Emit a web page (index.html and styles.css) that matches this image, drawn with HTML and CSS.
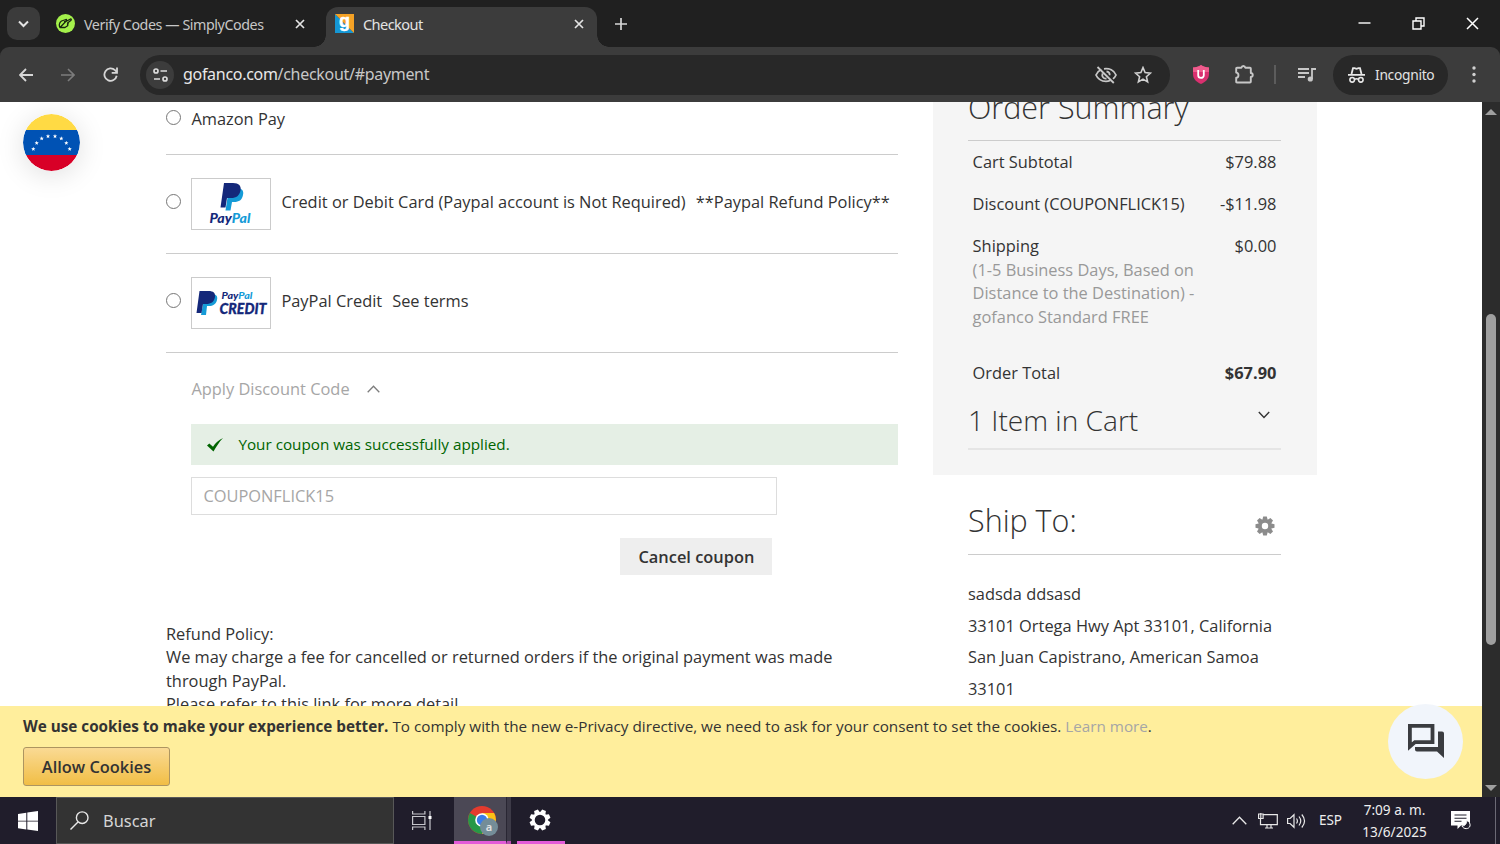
FILE: index.html
```html
<!DOCTYPE html>
<html lang="en">
<head>
    <meta charset="UTF-8">
    <meta name="viewport" content="width=device-width, initial-scale=1.0">
    <title>Checkout</title>
    <link rel="stylesheet" href="styles.css">
</head>
<body>

<!-- tabs -->
<div class="tabstrip">
  <button class="tab-search">
    <svg width="33" height="33" viewBox="0 0 33 33"><path d="M12 14.5l4.5 4.5 4.5-4.5" fill="none" stroke="#e3e3e3" stroke-width="2"/></svg>
  </button>
  <div class="tab">
    <svg class="favicon" width="19" height="19" viewBox="0 0 19 19"><circle cx="9.500" cy="9.500" r="9.500" fill="#a4f14b"/><path d="M4 13.500C2.800 12 3 8.500 5.500 7L10 5.500c.8 0 .8 1.200 0 1.500l-2 .8M9.500 7.800L14.500 5c1 0 1 1 .3 1.500L11.500 9c1 0 .8 1 0 1.500 .6.300.3 1.200-.3 1.500L9 13.500H4z" fill="none" stroke="#182410" stroke-width="1.300" stroke-linejoin="round"/></svg>
    <span class="tab-title">Verify Codes — SimplyCodes</span>
    <svg class="tab-x" width="10" height="10" viewBox="0 0 10 10"><path d="M1 1l8 8M9 1l-8 8" stroke="#e3e3e3" stroke-width="1.700"/></svg>
  </div>
  <div class="tab active">
    <svg class="favicon" width="19" height="19" viewBox="0 0 19 19"><path d="M0 0v19h19z" fill="#1597d5"/><path d="M0 0h19v19z" fill="#f5a225"/><text x="4" y="12.800" class="g">g</text></svg>
    <span class="tab-title">Checkout</span>
    <svg class="tab-x" width="10" height="10" viewBox="0 0 10 10"><path d="M1 1l8 8M9 1l-8 8" stroke="#e3e3e3" stroke-width="1.700"/></svg>
  </div>
  <svg class="plus" width="12" height="12" viewBox="0 0 12 12"><path d="M6 0v12M0 6h12" stroke="#d6d6d6" stroke-width="1.700"/></svg>
  <div class="win-buttons">
    <svg width="13" height="13" viewBox="0 0 13 13"><path d="M0.500 6h12" stroke="#fff" stroke-width="1.400"/></svg>
    <svg width="13" height="13" viewBox="0 0 13 13"><path d="M1 4h8v8H1zM4 4V1h8v8H9" fill="none" stroke="#fff" stroke-width="1.400"/></svg>
    <svg width="13" height="13" viewBox="0 0 13 13"><path d="M1 1l11 11M12 1L1 12" stroke="#fff" stroke-width="1.500"/></svg>
  </div>
</div>

<!-- toolbar -->
<div class="toolbar">
  <svg width="14" height="14" viewBox="0 0 14 14"><path d="M14 7H1.500M7 1L1 7l6 6" fill="none" stroke="#d6d6d6" stroke-width="1.800"/></svg>
  <svg width="14" height="14" viewBox="0 0 14 14"><path d="M0 7h12.500M7 1l6 6-6 6" fill="none" stroke="#7c7c7c" stroke-width="1.600"/></svg>
  <svg width="15" height="15" viewBox="0 0 15 15"><path d="M13.700 8.800A6.200 6.200 0 1 1 12 3.200L13.700 5" fill="none" stroke="#d6d6d6" stroke-width="1.800"/><path d="M14 .5v5.300H8.700" fill="none" stroke="#d6d6d6" stroke-width="1.800"/></svg>
  <div class="address">
    <span class="site-info">
      <svg width="15" height="14" viewBox="0 0 15 14"><g fill="none" stroke="#dcdcdc" stroke-width="1.700"><circle cx="3" cy="3" r="2"/><path d="M7.500 3H14M1 11h6"/><circle cx="12" cy="11" r="2"/></g></svg>
    </span>
    <span class="url">gofanco.com<span>/checkout/#payment</span></span>
    <svg class="eye" width="22" height="18" viewBox="0 0 22 18"><g fill="none" stroke="#c7c7c7" stroke-width="1.800"><path d="M6.300 3.500C3.900 4.500 2.100 6.500 1 9c1.800 4 5.600 6.300 10 6.300 1.500 0 2.900-.3 4.200-.8M9 2.800c5.200-.8 10 1.700 12 6.200-.7 1.600-1.700 2.900-3 3.900"/><path d="M7.500 7.500c-1 3 1 5.500 4 5M11.500 5.500c2 .2 3.300 1.800 3.200 3.800M2.500 1l16.300 16"/></g></svg>
    <svg width="18" height="18" viewBox="0 0 18 18"><path d="M9 1.600l2.100 5 5.400.5-4.100 3.600 1.200 5.200L9 13.100l-4.600 2.800 1.200-5.200-4.100-3.600 5.400-.5z" fill="none" stroke="#d0d0d0" stroke-width="1.600"/></svg>
  </div>
  <svg class="ublock" width="16" height="19" viewBox="0 0 16 19"><path d="M8 0c2 1.700 5 2.400 8 2.500V9c0 5-3.500 8-8 10-4.500-2-8-5-8-10V2.500C3 2.400 6 1.700 8 0z" fill="#d9306f"/><path d="M8 0c2 1.700 5 2.400 8 2.500V7H0V2.500C3 2.400 6 1.700 8 0z" fill="#ee5b8c"/><path d="M5.200 5v5.200c0 3.600 5.600 3.600 5.600 0V5" fill="none" stroke="#fff" stroke-width="1.800"/></svg>
  <svg class="puzzle" width="19" height="19" viewBox="0 0 19 19"><path d="M1.200 3.500q0-.8.800-.8h4.500c.3-2.300 3.400-2.300 3.700 0h4.800q.8 0 .8.800V8c2.600.3 2.600 3.700 0 4v4.700q0 .8-.8.800H2q-.8 0-.8-.8v-3.900c3-.3 3-4.900 0-5.200z" fill="none" stroke="#c7c7c7" stroke-width="1.900" stroke-linejoin="round"/></svg>
  <i class="sep"></i>
  <svg class="media" width="18" height="14" viewBox="0 0 18 14"><path d="M0 1h11M0 5h11M0 9h7M14 11V1h4" fill="none" stroke="#c7c7c7" stroke-width="1.800"/><circle cx="12.300" cy="11" r="2.600" fill="#c7c7c7"/></svg>
  <div class="incognito">
    <svg width="17" height="16" viewBox="0 0 17 16"><path d="M0 7.800h17M3.500 7L5 1.200h1.500l2 .7 2-.7H12L13.500 7" fill="none" stroke="#e8e8e8" stroke-width="1.800"/><g fill="none" stroke="#e8e8e8" stroke-width="1.600"><circle cx="4.200" cy="12.800" r="2.300"/><circle cx="12.800" cy="12.800" r="2.300"/><path d="M6.500 12.300q2-1 4 0"/></g></svg>
    <span>Incognito</span>
  </div>
  <svg class="dots" width="4" height="17" viewBox="0 0 4 17"><g fill="#d0d0d0"><circle cx="2" cy="2" r="1.700"/><circle cx="2" cy="8.500" r="1.700"/><circle cx="2" cy="15" r="1.700"/></g></svg>
</div>

<!-- page -->
<div class="viewport">
  <div class="page">
    <main class="payment">
      <div class="method first"><i class="radio"></i><span>Amazon Pay</span></div>
      <div class="method">
        <i class="radio"></i>
        <svg class="logo" width="80" height="52" viewBox="0 0 80 52"><rect x=".5" y=".5" width="79" height="51" fill="#fff" stroke="#cbcbcb"/><path d="M38 10h8c5 0 7 3 6 7-1 5-4 7-9 7h-2l-1.500 8.500h-5z" fill="#159bd7"/><path d="M33 5h9c6 0 8.500 3 7.500 7.500-1 5-4 7.500-9.500 7.500h-4l-1.500 9.500H29.500z" fill="#14287a"/><text class="pp" x="18.500" y="44.500" textLength="41" lengthAdjust="spacingAndGlyphs">Pay<tspan>Pal</tspan></text></svg>
        <span>Credit or Debit Card (Paypal account is Not Required)</span>
        <span class="link">**Paypal Refund Policy**</span>
      </div>
      <div class="method">
        <i class="radio"></i>
        <svg class="logo" width="80" height="52" viewBox="0 0 80 52"><rect x=".5" y=".5" width="79" height="51" fill="#fff" stroke="#cbcbcb"/><path d="M14 17h6c5 0 7 2 6 6-1 4-4 6-8 6h-2l-1 9h-5z" fill="#159bd7"/><path d="M8.500 14h9c5 0 7 2 6.500 6-1 5-4 7-9 7h-3l-1.500 9H5.500z" fill="#14287a"/><text class="pp small" x="30.500" y="22.300" textLength="31" lengthAdjust="spacingAndGlyphs">Pay<tspan>Pal</tspan></text><text class="credit" x="28.500" y="36.800" textLength="47" lengthAdjust="spacingAndGlyphs">CREDIT</text></svg>
        <span>PayPal Credit</span>
        <span class="link">See terms</span>
      </div>

      <div class="discount">
        <div class="discount-title">Apply Discount Code
          <svg width="13" height="8" viewBox="0 0 13 8"><path d="M.7 7.300l5.800-6 5.800 6" fill="none" stroke="#7d7d7d" stroke-width="1.300"/></svg>
        </div>
        <div class="success">
          <svg width="16" height="14" viewBox="0 0 16 14"><path d="M0 7.500l2.300-2L6 8.800C8.500 5 11.500 2 16 0 12 4 9.500 8.500 6.500 13.500z" fill="#006400"/></svg>
          <span>Your coupon was successfully applied.</span>
        </div>
        <div class="coupon">COUPONFLICK15</div>
        <button class="cancel">Cancel coupon</button>
      </div>

      <p class="policy">Refund Policy:<br>We may charge a fee for cancelled or returned orders if the original payment was made<br>through PayPal.<br>Please refer to this link for more detail.</p>
    </main>

    <aside class="sidebar">
      <div class="summary">
        <h2 class="summary-title">Order Summary</h2>
        <div class="line"><span>Cart Subtotal</span><span>$79.88</span></div>
        <div class="line"><span>Discount (COUPONFLICK15)</span><span>-$11.98</span></div>
        <div class="line ship"><span>Shipping<br><small>(1-5 Business Days, Based on<br>Distance to the Destination) -<br>gofanco Standard FREE</small></span><span>$0.00</span></div>
        <div class="line total"><span>Order Total</span><b>$67.90</b></div>
        <div class="items">
          <h3>1 Item in Cart</h3>
          <svg width="12" height="8" viewBox="0 0 12 8"><path d="M.8 1L6 6.500 11.200 1" fill="none" stroke="#333" stroke-width="1.400"/></svg>
        </div>
      </div>
      <div class="ship-to">
        <div class="ship-head">
          <h2>Ship To:</h2>
          <svg width="20" height="20" viewBox="-10 -10 20 20"><g fill="#8c8c8c"><path d="M-1.800-9.500h3.600l1 4h-5.600z"/><path d="M-1.800-9.500h3.600l1 4h-5.600z" transform="rotate(45)"/><path d="M-1.800-9.500h3.600l1 4h-5.600z" transform="rotate(90)"/><path d="M-1.800-9.500h3.600l1 4h-5.600z" transform="rotate(135)"/><path d="M-1.800-9.500h3.600l1 4h-5.600z" transform="rotate(180)"/><path d="M-1.800-9.500h3.600l1 4h-5.600z" transform="rotate(225)"/><path d="M-1.800-9.500h3.600l1 4h-5.600z" transform="rotate(270)"/><path d="M-1.800-9.500h3.600l1 4h-5.600z" transform="rotate(315)"/></g><circle r="5" fill="none" stroke="#8c8c8c" stroke-width="3.600"/></svg>
        </div>
        <p>sadsda ddsasd<br>33101 Ortega Hwy Apt 33101, California<br>San Juan Capistrano, American Samoa<br>33101</p>
      </div>
    </aside>

    <!-- floating country flag -->
    <svg class="flag" width="57" height="57" viewBox="0 0 57 57">
      <clipPath id="round"><circle cx="28.500" cy="28.500" r="28.500"/></clipPath>
      <g clip-path="url(#round)"><path d="M0 0h57v16H0z" fill="#ffda44"/><path d="M0 16h57v25H0z" fill="#0052b4"/><path d="M0 41h57v16H0z" fill="#d80027"/></g>
      <defs><path id="star" d="M0-2.200l.55 1.500h1.600L.9.250l.5 1.600L0 .9l-1.400.95.500-1.600L-2.150-.7h1.600z" fill="#fff"/></defs>
      <use href="#star" x="10.300" y="35"/><use href="#star" x="13.700" y="29"/><use href="#star" x="18.700" y="24.500"/><use href="#star" x="25" y="22.300"/><use href="#star" x="32" y="22.300"/><use href="#star" x="38.300" y="24.500"/><use href="#star" x="43.300" y="29"/><use href="#star" x="46.700" y="35"/>
    </svg>

    <div class="cookies">
      <p><b>We use cookies to make your experience better.</b> <span>To comply with the new e-Privacy directive, we need to ask for your consent to set the cookies. <a>Learn more</a>.</span></p>
      <button>Allow Cookies</button>
    </div>

    <div class="chat">
      <svg width="36" height="35" viewBox="0 0 36 35"><path d="M1.900 1.900h22.600v16.200H7L1.900 22.500z" fill="none" stroke="#3a3c40" stroke-width="3.800"/><path d="M30 7.500h4q2 0 2 2V34l-7-6.500H9q-2 0-2-2V23h23z" fill="#3a3c40"/></svg>
    </div>
  </div>
  <div class="scrollbar">
    <svg width="12" height="6" viewBox="0 0 12 6"><path d="M0 6l6-6 6 6z" fill="#9f9f9f"/></svg>
    <i></i>
    <svg width="12" height="6" viewBox="0 0 12 6"><path d="M0 0l6 6 6-6z" fill="#9f9f9f"/></svg>
  </div>
</div>

<!-- windows taskbar -->
<div class="taskbar">
  <div class="start"><svg width="20" height="20" viewBox="0 0 20 20"><path d="M0 3l8.300-1.300v8H0zM9.300 1.500L20 0v9.700H9.300zM0 10.600h8.300v7.900L0 17.300zM9.300 10.600H20V20L9.300 18.600z" fill="#fff"/></svg></div>
  <div class="search">
    <svg width="19" height="19" viewBox="0 0 19 19"><circle cx="12.200" cy="6.700" r="5.800" fill="none" stroke="#e8e8e8" stroke-width="1.400"/><path d="M8 11L.5 18.500" stroke="#e8e8e8" stroke-width="1.400"/></svg>
    <span>Buscar</span>
  </div>
  <div class="task-view"><svg width="20" height="19" viewBox="0 0 20 19"><path d="M.6 0v3h12.300V0M.6 19v-3h12.300v3M.6 5.500h12.300v8H.6zM18 0v19" fill="none" stroke="#c6c6cc" stroke-width="1.200"/><path d="M16.500 5h3v3h-3z" fill="#fff"/></svg></div>
  <div class="app chrome">
    <svg width="32" height="32" viewBox="0 0 32 32"><circle cx="15" cy="15" r="14" fill="#e33b2e"/><path d="M15 15L2.900 8A14 14 0 0 0 15 29l6-10z" fill="#279847"/><path d="M15 15l6 3.500L15 29A14 14 0 0 0 27.100 8H15z" fill="#fbc116"/><circle cx="15" cy="15" r="6.800" fill="#fff"/><circle cx="15" cy="15" r="5.200" fill="#3b7de8"/><circle cx="22" cy="22" r="9" fill="#748d98"/><text x="22" y="26" text-anchor="middle" class="badge">a</text></svg>
  </div>
  <i class="stack"></i>
  <div class="app settings">
    <svg width="22" height="22" viewBox="-11 -11 22 22"><g fill="#fff"><path d="M-2-10.500h4l1 4h-6z" transform="rotate(22.500)"/><path d="M-2-10.500h4l1 4h-6z" transform="rotate(67.500)"/><path d="M-2-10.500h4l1 4h-6z" transform="rotate(112.500)"/><path d="M-2-10.500h4l1 4h-6z" transform="rotate(157.500)"/><path d="M-2-10.500h4l1 4h-6z" transform="rotate(202.500)"/><path d="M-2-10.500h4l1 4h-6z" transform="rotate(247.500)"/><path d="M-2-10.500h4l1 4h-6z" transform="rotate(292.500)"/><path d="M-2-10.500h4l1 4h-6z" transform="rotate(337.500)"/></g><circle r="6.600" fill="none" stroke="#fff" stroke-width="2.600"/></svg>
  </div>
  <div class="tray">
    <svg width="15" height="9" viewBox="0 0 15 9"><path d="M.7 8.300l6.800-7 6.800 7" fill="none" stroke="#e8e8e8" stroke-width="1.300"/></svg>
    <svg class="net" width="20" height="16" viewBox="0 0 20 16"><path d="M5.500 1.600h13.800v10H2.500V6M7 15h8M9 12v3M13 12v3M.6 1h4.500v4.500H.6zM2.800 0v5" fill="none" stroke="#e8e8e8" stroke-width="1.200"/></svg>
    <svg class="vol" width="19" height="16" viewBox="0 0 19 16"><path d="M.6 5.500h2.500L7 1.700v12.600l-3.900-3.800H.6zM9.500 5.500q1.800 2.500 0 5M12 3.500q3.500 4.500 0 9M14.800 1.500q5.500 6.500 0 13" fill="none" stroke="#e8e8e8" stroke-width="1.200"/></svg>
    <span class="lang">ESP</span>
    <div class="clock">7:09 a. m.<br>13/6/2025</div>
    <svg class="notify" width="20" height="20" viewBox="0 0 20 20"><path d="M0 0h19v14.500h-9L6.500 18v-3.500H0z" fill="#fff"/><path d="M3.500 4h12M3.500 7.200h12M3.500 10.300h7" stroke="#22202e" stroke-width="1.100"/><path d="M15.500 9.500c.5 3-1.500 5.500-4.500 5.500 1.500 3.500 7 3.500 8 0 .5-2.500-1-5-3.500-5.500z" fill="#22202e" stroke="#fff" stroke-width="1"/></svg>
  </div>
</div>

</body>
</html>
```
FILE: styles.css
```css
* {
    margin: 0;
    padding: 0;
    box-sizing: border-box;
}
body {
    width: 1500px;
    height: 844px;
    display: flex;
    flex-direction: column;
    overflow: hidden;
    font-family: "Open Sans", sans-serif;
    font-size: 16.4px;
    line-height: 23.4px;
    color: #333;
    background-color: #202020;
}
svg {
    display: block;
    flex-shrink: 0;
}
button {
    border: 0;
    font-family: inherit;
    font-size: inherit;
    color: inherit;
}

/* tabs */
.tabstrip {
    height: 47px;
    flex-shrink: 0;
    display: flex;
    align-items: center;
    background-color: #202020;
    padding-left: 7px;
}
.tab-search {
    width: 33px;
    height: 33px;
    background-color: #3b3b3b;
    border-radius: 10px;
}
.tab {
    height: 40px;
    width: 286px;
    padding-left: 16px;
    padding-right: 21px;
    margin-top: 7px;
    display: flex;
    align-items: center;
    font-family: "Noto Sans", sans-serif;
    font-size: 14.3px;
    letter-spacing: -0.44px;
    color: #c7c7c7;
}
.tab > * {
    margin-bottom: 7px;
}
.tab.active {
    position: relative;
    width: 271px;
    padding-left: 9px;
    padding-right: 13px;
    background-color: #3c3c3c;
    border-radius: 12px 12px 0 0;
    color: #e3e3e3;
}
/* flared feet of the selected tab */
.tab.active::before,
.tab.active::after {
    content: "";
    position: absolute;
    bottom: 0;
    width: 12px;
    height: 12px;
    margin: 0;
}
.tab.active::before {
    left: -12px;
    background: radial-gradient(circle at 0 0, transparent 11.5px, #3c3c3c 12px);
}
.tab.active::after {
    right: -12px;
    background: radial-gradient(circle at 100% 0, transparent 11.5px, #3c3c3c 12px);
}
.tab .tab-title {
    margin-left: 9px;
    margin-bottom: 5px;
    flex: 1;
    white-space: nowrap;
}
.tab.active .tab-title {
    letter-spacing: -0.6px;
    font-size: 14.6px;
}
.g {
    font-family: "Liberation Sans", sans-serif;
    font-weight: bold;
    font-size: 18px;
    fill: #fff;
    stroke: #fff;
    stroke-width: 0.5px;
}
.plus {
    margin-left: 18px;
}
.win-buttons {
    margin-left: auto;
    margin-right: 21px;
    display: flex;
    gap: 41px;
}

/* toolbar */
.toolbar {
    height: 55px;
    flex-shrink: 0;
    display: flex;
    align-items: center;
    padding-left: 19px;
    background-color: #3c3c3c;
    border-radius: 9px 9px 0 0;
    font-family: "Noto Sans", sans-serif;
}
.toolbar > svg + svg {
    margin-left: 28px;
}
.address {
    margin-left: 22px;
    width: 1030px;
    height: 40px;
    border-radius: 20px;
    background-color: #282828;
    display: flex;
    align-items: center;
    padding: 0 18px 0 6px;
}
.site-info {
    width: 28px;
    height: 28px;
    border-radius: 50%;
    background-color: #3c3c3c;
    display: grid;
    place-items: center;
}
.url {
    margin-left: 9px;
    font-size: 16px;
    letter-spacing: -0.3px;
    color: #e8e8e8;
    flex: 1;
}
.url span {
    color: #c7c7c7;
}
.eye {
    margin-right: 17px;
}
.ublock {
    margin-left: 23px;
}
.toolbar > .puzzle {
    margin-left: 26px;
}
.sep {
    width: 2px;
    height: 19px;
    margin-left: 20px;
    background-color: #5c5c5c;
}
.media {
    margin-left: 22px;
}
.incognito {
    margin-left: 17px;
    width: 115px;
    height: 40px;
    border-radius: 20px;
    background-color: #282828;
    display: flex;
    align-items: center;
    padding-left: 15px;
    gap: 10px;
    font-size: 13.8px;
    letter-spacing: -0.3px;
    color: #e3e3e3;
}
.dots {
    margin-left: 24px;
}

/* page */
.viewport {
    height: 695px;
    display: flex;
    flex-shrink: 0;
}
.page {
    position: relative;
    width: 1482px;
    height: 695px;
    overflow: hidden;
    display: flex;
    align-items: flex-start;
    padding-left: 166px;
    background-color: #fff;
}
.payment {
    width: 732px;
}
.method {
    height: 99px;
    border-bottom: 1px solid #ccc;
    display: flex;
    align-items: center;
    white-space: nowrap;
}
.method.first {
    height: 53px;
    padding-bottom: 19px;
}
.method .radio {
    width: 15px;
    height: 15px;
    border: 1px solid #767676;
    border-radius: 50%;
    margin-right: 10.400px;
    margin-bottom: 6px;
}
.method.first .radio {
    margin-bottom: 3px;
}
.method span {
    margin-bottom: 4px;
}
.method.first span {
    margin-bottom: 0;
}
.logo {
    margin-right: 10px;
}
.method .link {
    margin-left: 10px;
}
.pp {
    font-family: "Lato", sans-serif;
    font-weight: 900;
    font-style: italic;
    font-size: 13px;
    fill: #14287a;
}
.pp tspan {
    fill: #159bd7;
}
.pp.small {
    font-size: 9.5px;
}
.credit {
    font-family: "Lato", sans-serif;
    font-weight: 900;
    font-style: italic;
    font-size: 15.5px;
    fill: #14287a;
    stroke: #14287a;
    stroke-width: 0.3px;
}
.discount {
    padding: 24px 0 0 25.400px;
}
.discount-title {
    display: flex;
    align-items: center;
    gap: 17px;
    color: #a6a6a6;
}
.success {
    margin-top: 24px;
    height: 41px;
    background-color: #e5efe5;
    color: #006400;
    display: flex;
    align-items: center;
    padding-left: 16px;
    gap: 15px;
    font-size: 15.25px;
}
.coupon {
    margin-top: 12px;
    width: 586px;
    height: 38px;
    border: 1px solid #ddd;
    padding: 6px 11px;
    color: #a6a6a6;
}
.cancel {
    display: block;
    width: 152px;
    height: 37px;
    margin: 23px 0 0 429px;
    padding-bottom: 1px;
    background-color: #eee;
    font-weight: 600;
}
.policy {
    margin-top: 46.4px;
    white-space: nowrap;
}

/* sidebar */
.sidebar {
    width: 384px;
    margin-left: 35px;
}
.sidebar h2,
.sidebar h3 {
    font-weight: 300;
    font-size: 30.5px;
    line-height: 34px;
}
.summary {
    height: 373px;
    padding: 0 36px 0 35px;
    background-color: #f5f5f5;
}
.summary-title {
    height: 39px;
    margin-bottom: 9px;
    border-bottom: 1px solid #ccc;
    display: flex;
    align-items: flex-end;
    padding-bottom: 16px;
}
.line {
    display: flex;
    justify-content: space-between;
    padding: 0 4.600px;
    margin-bottom: 18.8px;
}
.line small {
    font-size: inherit;
    color: #999;
}
.line.ship {
    margin-bottom: 33px;
}
.line.total {
    margin-bottom: 15px;
}
.items {
    display: flex;
    justify-content: space-between;
    border-bottom: 2px solid #e5e5e5;
    height: 51px;
    padding: 5px 11px 0 0;
}
.sidebar .items h3 {
    font-size: 28.1px;
    line-height: 32px;
}
.items svg {
    margin-top: 7px;
}
.ship-to {
    padding: 28px 36px 0 35px;
}
.ship-head {
    display: flex;
    justify-content: space-between;
    height: 52px;
    padding-right: 6px;
    border-bottom: 1px solid #ccc;
}
.ship-head svg {
    margin-top: 13px;
}
.ship-to p {
    margin-top: 23px;
    line-height: 31.6px;
    white-space: nowrap;
}

/* things that float over the page */
.flag {
    position: absolute;
    left: 23px;
    top: 12px;
    border-radius: 50%;
    box-shadow: 0 4px 28px rgba(0, 0, 0, 0.13);
}
.cookies {
    position: absolute;
    left: 0;
    right: 0;
    bottom: 0;
    height: 91px;
    padding: 9px 23px;
    background-color: #ffee9c;
    font-size: 15.25px;
}
.cookies p {
    white-space: nowrap;
}
.cookies a {
    color: #a6a6a6;
}
.cookies button {
    margin-top: 9px;
    width: 147px;
    height: 39px;
    border: 1px solid #ad9560;
    border-radius: 3px;
    background-image: linear-gradient(#fada94, #f1be45);
    font-size: 16.4px;
    font-weight: 600;
}
.chat {
    position: absolute;
    left: 1388px;
    top: 602px;
    width: 75px;
    height: 75px;
    border-radius: 50%;
    background-color: #f1f5fb;
    display: grid;
    place-items: center;
}
.scrollbar {
    width: 18px;
    background-color: #2c2c2c;
    display: flex;
    flex-direction: column;
    align-items: center;
    justify-content: space-between;
    padding: 7px 0 6px;
}
.scrollbar i {
    width: 10px;
    height: 331px;
    margin-top: 58px;
    border-radius: 5px;
    background-color: #9f9f9f;
}

/* taskbar */
.taskbar {
    height: 47px;
    flex-shrink: 0;
    display: flex;
    background-color: #201d2b;
    color: #eee;
    font-family: "Noto Sans", sans-serif;
}
.start {
    width: 56px;
    padding: 14px 0 0 18px;
}
.search {
    width: 338px;
    border: 1px solid #585858;
    background-color: #333;
    display: flex;
    align-items: center;
    padding-left: 13px;
    gap: 14px;
    color: #d6d6d6;
}
.search span {
    padding-top: 1px;
}
.task-view {
    width: 60px;
    padding: 14px 0 0 18px;
}
.app {
    border-bottom: 3px solid #e35bd8;
}
.chrome {
    width: 52px;
    padding: 8px 0 0 13px;
    background-color: #4b4855;
}
.stack {
    width: 5px;
    background-color: #3d3a47;
    border-left: 1px solid #292633;
    border-bottom: 3px solid #b94cb1;
}
.settings {
    width: 48px;
    margin-left: 6px;
    padding: 12px 0 0 12px;
}
.badge {
    font-size: 11px;
    font-weight: 600;
    fill: #e3e3e3;
}
.tray {
    margin-left: auto;
    display: flex;
    align-items: center;
    border-right: 1px solid #6b6975;
    margin-right: 4px;
    padding-right: 24px;
}
.net {
    margin-left: 11px;
}
.vol {
    margin-left: 9px;
}
.lang {
    margin-left: 13px;
    padding-top: 1px;
    font-size: 13.5px;
}
.clock {
    margin-left: 20px;
    width: 65px;
    text-align: center;
    white-space: nowrap;
    font-size: 13.6px;
    line-height: 22px;
}
.notify {
    margin-left: 24px;
}
```
